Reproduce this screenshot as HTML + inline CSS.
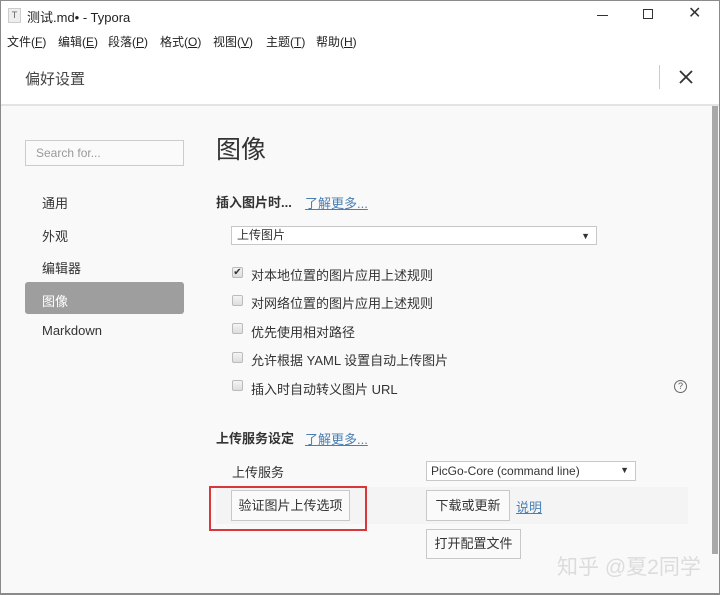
<!DOCTYPE html>
<html><head><meta charset="utf-8"><style>
*{margin:0;padding:0;box-sizing:border-box}
body{width:720px;height:595px;overflow:hidden;background:#fff;font-family:"Liberation Sans","Noto Sans CJK SC",sans-serif;color:#333;position:relative}
.a{position:absolute;white-space:nowrap}
.win{position:absolute;left:0;top:0;width:720px;height:595px;border:1px solid #8a8a8a;border-bottom:2px solid #8a8a8a}
.cb{position:absolute;width:11px;height:11px;border:1px solid #bbb;border-radius:2px;background:linear-gradient(#f4f4f4,#ddd)}
.btn{position:absolute;border:1px solid #c8c8c8;background:#fafafa;font-size:13px;color:#333;text-align:center}
.lk{color:#4a7fb5;text-decoration:underline;font-size:13px}
.m{position:absolute;top:33px;font-size:12px;color:#222;white-space:nowrap}
</style></head><body>
<div class="a" style="left:0;top:105px;width:720px;height:490px;background:#f9f9f9"></div>
<div class="a" style="left:0;top:104px;width:720px;height:2px;background:#e4e4e4"></div>
<div class="win"></div>
<div class="a" style="left:8px;top:8px;width:13px;height:15px;background:#eee;border:1px solid #ccc;font-size:9px;text-align:center;line-height:13px;color:#666">T</div>
<div class="a" style="left:27px;top:7px;font-size:13px;color:#222">测试.md• - Typora</div>
<div class="a" style="left:597px;top:15px;width:11px;height:1px;background:#333"></div>
<div class="a" style="left:643px;top:9px;width:10px;height:10px;border:1px solid #333"></div>
<div class="a" style="left:688px;top:3px;font-size:16px;color:#333">✕</div>
<div class="m" style="left:7px">文件(<u>F</u>)</div>
<div class="m" style="left:58px">编辑(<u>E</u>)</div>
<div class="m" style="left:108px">段落(<u>P</u>)</div>
<div class="m" style="left:160px">格式(<u>O</u>)</div>
<div class="m" style="left:213px">视图(<u>V</u>)</div>
<div class="m" style="left:266px">主题(<u>T</u>)</div>
<div class="m" style="left:316px">帮助(<u>H</u>)</div>
<div class="a" style="left:25px;top:68px;font-size:15px;color:#444">偏好设置</div>
<div class="a" style="left:659px;top:65px;width:1px;height:24px;background:#ccc"></div>
<svg class="a" style="left:679px;top:70px" width="14" height="14"><path d="M1 1L13 13M13 1L1 13" stroke="#333" stroke-width="1.8"/></svg>
<div class="a" style="left:25px;top:140px;width:159px;height:26px;border:1px solid #ccc;background:#fafafa;font-size:12px;color:#999;padding:5px 10px">Search for...</div>
<div class="a" style="left:42px;top:193px;font-size:13px">通用</div>
<div class="a" style="left:42px;top:226px;font-size:13px">外观</div>
<div class="a" style="left:42px;top:258px;font-size:13px">编辑器</div>
<div class="a" style="left:25px;top:282px;width:159px;height:32px;background:#9e9e9e;border-radius:3px"></div>
<div class="a" style="left:42px;top:291px;font-size:13px;color:#fff">图像</div>
<div class="a" style="left:42px;top:323px;font-size:13px">Markdown</div>
<div class="a" style="left:216px;top:130px;font-size:25px;color:#333">图像</div>
<div class="a" style="left:216px;top:192px;font-size:13px;font-weight:bold;color:#333">插入图片时...</div>
<div class="a lk" style="left:305px;top:193px">了解更多...</div>
<div class="a" style="left:231px;top:226px;width:366px;height:19px;border:1px solid #c8c8c8;background:#fff;font-size:12px;padding:1px 5px;line-height:15px">上传图片<span style="position:absolute;right:6px;top:2px;font-size:9px">▼</span></div>
<div class="cb" style="left:232px;top:267px;font-size:10px;line-height:9px;text-align:center;color:#333">✔</div>
<div class="a" style="left:251px;top:265px;font-size:13px">对本地位置的图片应用上述规则</div>
<div class="cb" style="left:232px;top:295px"></div>
<div class="a" style="left:251px;top:293px;font-size:13px">对网络位置的图片应用上述规则</div>
<div class="cb" style="left:232px;top:323px"></div>
<div class="a" style="left:251px;top:322px;font-size:13px">优先使用相对路径</div>
<div class="cb" style="left:232px;top:352px"></div>
<div class="a" style="left:251px;top:350px;font-size:13px">允许根据 YAML 设置自动上传图片</div>
<div class="cb" style="left:232px;top:380px"></div>
<div class="a" style="left:251px;top:379px;font-size:13px">插入时自动转义图片 URL</div>
<div class="a" style="left:674px;top:380px;width:13px;height:13px;border:1px solid #666;border-radius:50%;font-size:9px;line-height:11px;text-align:center;color:#555">?</div>
<div class="a" style="left:216px;top:428px;font-size:13px;font-weight:bold">上传服务设定</div>
<div class="a lk" style="left:305px;top:429px">了解更多...</div>
<div class="a" style="left:232px;top:462px;font-size:13px">上传服务</div>
<div class="a" style="left:426px;top:461px;width:210px;height:20px;border:1px solid #c8c8c8;background:#fff;font-size:12px;padding:2px 4px">PicGo-Core (command line)<span style="position:absolute;right:6px;top:3px;font-size:9px">▼</span></div>
<div class="a" style="left:216px;top:487px;width:472px;height:37px;background:#f4f4f4"></div>
<div class="btn" style="left:231px;top:490px;width:119px;height:31px;line-height:29px">验证图片上传选项</div>
<div class="a" style="left:209px;top:486px;width:158px;height:45px;border:2px solid #d9383a"></div>
<div class="btn" style="left:426px;top:490px;width:84px;height:31px;line-height:29px">下载或更新</div>
<div class="a lk" style="left:516px;top:497px">说明</div>
<div class="btn" style="left:426px;top:529px;width:95px;height:30px;line-height:28px">打开配置文件</div>
<div class="a" style="left:557px;top:551px;font-size:21px;color:#dcdcdc">知乎 @夏2同学</div>
<div class="a" style="left:712px;top:106px;width:6px;height:448px;background:#a8a8a8"></div>
</body></html>
